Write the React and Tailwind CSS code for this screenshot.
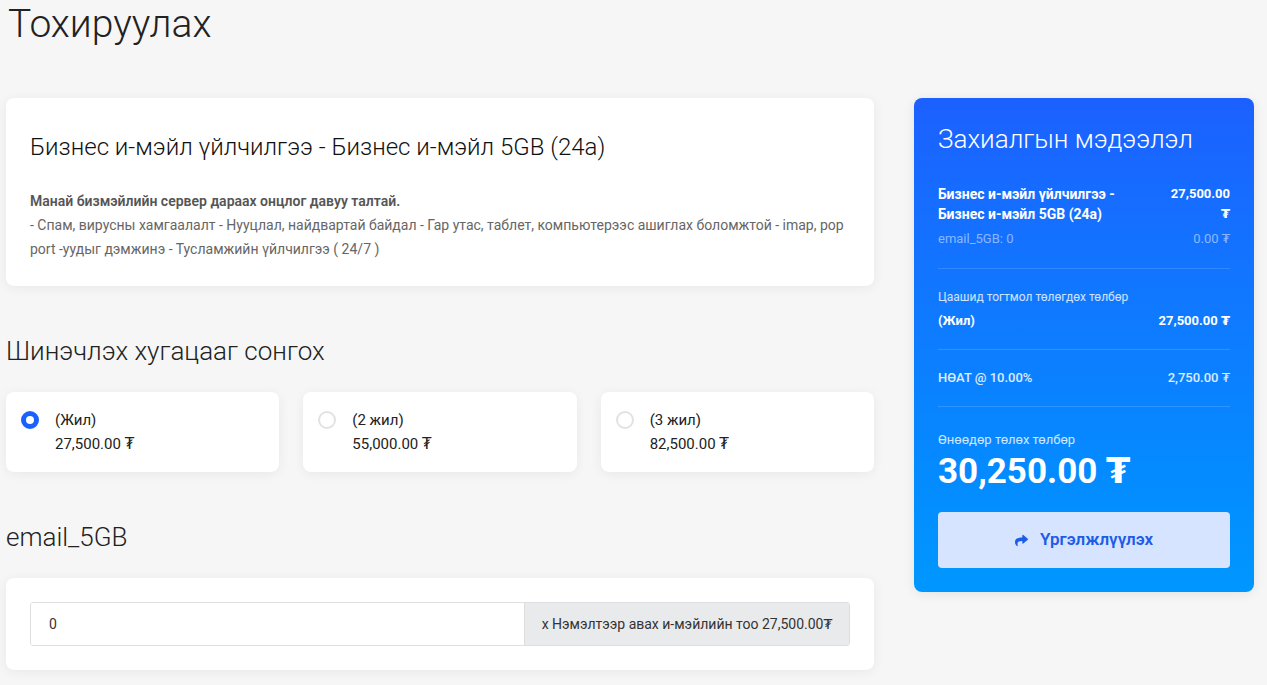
import { FaShare } from "react-icons/fa";

const periods = [
  { label: "(Жил)", price: "27,500.00 ₮", checked: true },
  { label: "(2 жил)", price: "55,000.00 ₮" },
  { label: "(3 жил)", price: "82,500.00 ₮" },
];

const Card = ({ className = "", children }) => (
  <div className={`bg-white rounded-lg shadow-[0_2px_12px_rgba(0,0,0,0.06)] ${className}`}>
    {children}
  </div>
);

export default function App() {
  return (
    <div className="min-h-screen bg-[#f6f6f6] font-['Roboto','DejaVu_Sans',sans-serif] text-[#222] pl-[6px] pr-[13px]">
      <h1 className="text-[39px] leading-[48px] font-light pl-[2px] mb-[50px]">Тохируулах</h1>

      <div className="flex gap-10 items-start">
        {/* Left column */}
        <div className="w-[868px]">
          <Card className="px-6 pt-[35px] pb-[25px]">
            <h2 className="text-2xl leading-[29px] font-light text-[#111]">
              Бизнес и-мэйл үйлчилгээ - Бизнес и-мэйл 5GB (24а)
            </h2>
            <p className="mt-[27px] text-sm leading-6 text-[#666]">
              <b className="font-semibold text-[#555]">Манай бизмэйлийн сервер дараах онцлог давуу талтай.</b>
              <br />
              - Спам, вирусны хамгаалалт - Нууцлал, найдвартай байдал - Гар утас, таблет, компьютерээс ашиглах боломжтой - imap, pop port -уудыг дэмжинэ - Тусламжийн үйлчилгээ ( 24/7 )
            </p>
          </Card>

          <h3 className="mt-[50px] text-[26px] leading-[31px] font-light">Шинэчлэх хугацааг сонгох</h3>

          <div className="mt-[25px] grid grid-cols-3 gap-6">
            {periods.map((p) => (
              <Card key={p.label} className="h-20 flex items-start gap-4 pl-[15px] pt-4">
                {p.checked ? (
                  <span className="mt-[3px] w-[18px] h-[18px] rounded-full border-[5px] border-[#1a62ff] bg-white shrink-0" />
                ) : (
                  <span className="mt-[3px] w-[18px] h-[18px] rounded-full border-2 border-[#e2e2e2] bg-white shrink-0" />
                )}
                <div className="text-[15px] leading-6 text-[#222]">
                  <div>{p.label}</div>
                  <div>{p.price}</div>
                </div>
              </Card>
            ))}
          </div>

          <h3 className="mt-[50px] text-[26px] leading-[31px] font-light">email_5GB</h3>

          <Card className="mt-[25px] p-6">
            <div className="flex h-[44px] rounded-[3px] border border-[#dedede] overflow-hidden">
              <input
                defaultValue="0"
                className="flex-1 min-w-0 px-[18px] text-sm text-[#333] bg-white outline-none"
              />
              <span className="w-[325px] flex items-center justify-center bg-[#e9eaec] border-l border-[#dedede] text-sm text-[#333]">
                х Нэмэлтээр авах и-мэйлийн тоо 27,500.00₮
              </span>
            </div>
          </Card>
        </div>

        {/* Order summary */}
        <div className="w-[340px] rounded-lg bg-linear-to-b from-[#1c60ff] to-[#0097ff] shadow-[0_2px_12px_rgba(0,0,0,0.08)] px-6 pt-6 pb-6 text-white">
          <h3 className="text-[26px] leading-[34px] font-light">Захиалгын мэдээлэл</h3>

          <div className="mt-[28px] pb-[19px] border-b border-white/15">
            <div className="grid grid-cols-[200px_1fr] leading-5 font-bold">
              <span className="text-sm">Бизнес и-мэйл үйлчилгээ - Бизнес и-мэйл 5GB (24а)</span>
              <span className="pl-[30px] text-right text-[13px]">27,500.00 ₮</span>
            </div>
            <div className="mt-[5px] flex justify-between text-[13px] leading-5 text-white/50">
              <span>email_5GB: 0</span>
              <span>0.00 ₮</span>
            </div>
          </div>

          <div className="py-[18px] border-b border-white/15">
            <div className="text-xs leading-5 text-white/80">Цаашид тогтмол төлөгдөх төлбөр</div>
            <div className="mt-1 flex justify-between text-[13px] leading-5 font-bold">
              <span>(Жил)</span>
              <span>27,500.00 ₮</span>
            </div>
          </div>

          <div className="py-[18px] border-b border-white/15 flex justify-between text-[13px] leading-5 font-medium text-white/85">
            <span>НӨАТ @ 10.00%</span>
            <span>2,750.00 ₮</span>
          </div>

          <div className="mt-[23px] text-[13px] leading-5 text-white/80">Өнөөдөр төлөх төлбөр</div>
          <div className="text-[35px] leading-[43px] font-bold">30,250.00 ₮</div>

          <button className="mt-[19px] w-full h-14 rounded bg-[#d6e4ff] text-[#1b5ce8] flex items-center justify-center gap-3 text-[17px] font-semibold">
            <FaShare className="w-[13px] h-[13px]" />
            Үргэлжлүүлэх
          </button>
        </div>
      </div>
    </div>
  );
}
